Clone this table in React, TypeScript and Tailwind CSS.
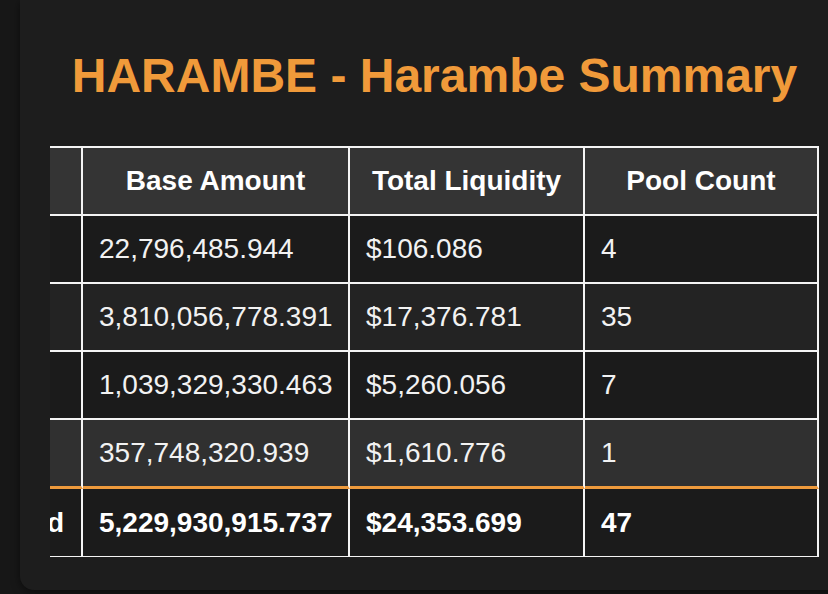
import React from "react";

const rows = [
  { base: "22,796,485.944", liq: "$106.086", count: "4", bg: "bg-[#1b1b1b]" },
  { base: "3,810,056,778.391", liq: "$17,376.781", count: "35", bg: "bg-[#232323]" },
  { base: "1,039,329,330.463", liq: "$5,260.056", count: "7", bg: "bg-[#1b1b1b]" },
  { base: "357,748,320.939", liq: "$1,610.776", count: "1", bg: "bg-[#303030]" },
];

export default function App() {
  const font = { fontFamily: '"Liberation Sans", Arial, sans-serif' };
  return (
    <div className="w-[828px] h-[594px] overflow-hidden bg-[#171717]" style={font}>
      <div className="ml-[20px] w-[827px] h-[590px] rounded-b-[14px] bg-[#1d1d1d] shadow-[0_2px_8px_rgba(0,0,0,0.5)] pt-[48px] pl-[30px] pr-[28px]">
        <h1 className="text-center text-[48px] leading-[55px] font-bold text-[#f09a3a]">
          HARAMBE - Harambe Summary
        </h1>
        <div className="mt-[43px] w-[769px] overflow-hidden">
          <table className="table-fixed w-[898px] ml-[-129px] border-separate border-spacing-0 text-[28px] text-[#f2f2f2]">
            <colgroup>
              <col className="w-[162px]" />
              <col className="w-[267px]" />
              <col className="w-[235px]" />
              <col className="w-[234px]" />
            </colgroup>
            <thead>
              <tr className="bg-[#343434]">
                <th className="h-[70px] border-t-2 border-r-2 border-b-2 border-[#f4f4f4]"></th>
                <th className="h-[70px] border-t-2 border-r-2 border-b-2 border-[#f4f4f4] font-bold text-white text-center">Base Amount</th>
                <th className="h-[70px] border-t-2 border-r-2 border-b-2 border-[#f4f4f4] font-bold text-white text-center">Total Liquidity</th>
                <th className="h-[70px] border-t-2 border-r-2 border-b-2 border-[#f4f4f4] font-bold text-white text-center">Pool Count</th>
              </tr>
            </thead>
            <tbody>
              {rows.map((r, i) => {
                const last = i === rows.length - 1;
                const b = last
                  ? "h-[69px] border-r-2 border-r-[#f4f4f4] border-b-[3px] border-b-[#ee9a3c]"
                  : "h-[68px] border-r-2 border-b-2 border-[#f4f4f4]";
                return (
                  <tr key={i} className={r.bg}>
                    <td className={b}></td>
                    <td className={`pl-4 whitespace-nowrap ${b}`}>{r.base}</td>
                    <td className={`pl-4 whitespace-nowrap ${b}`}>{r.liq}</td>
                    <td className={`pl-4 ${b}`}>{r.count}</td>
                  </tr>
                );
              })}
              <tr className="bg-[#1b1b1b] font-bold text-white">
                <td className="h-[68px] text-right pr-[17px] whitespace-nowrap border-r-2 border-b border-[#f4f4f4]">Combined</td>
                <td className="h-[68px] pl-4 whitespace-nowrap border-r-2 border-b border-[#f4f4f4]">5,229,930,915.737</td>
                <td className="h-[68px] pl-4 whitespace-nowrap border-r-2 border-b border-[#f4f4f4]">$24,353.699</td>
                <td className="h-[68px] pl-4 border-r-2 border-b border-[#f4f4f4]">47</td>
              </tr>
            </tbody>
          </table>
        </div>
      </div>
    </div>
  );
}
